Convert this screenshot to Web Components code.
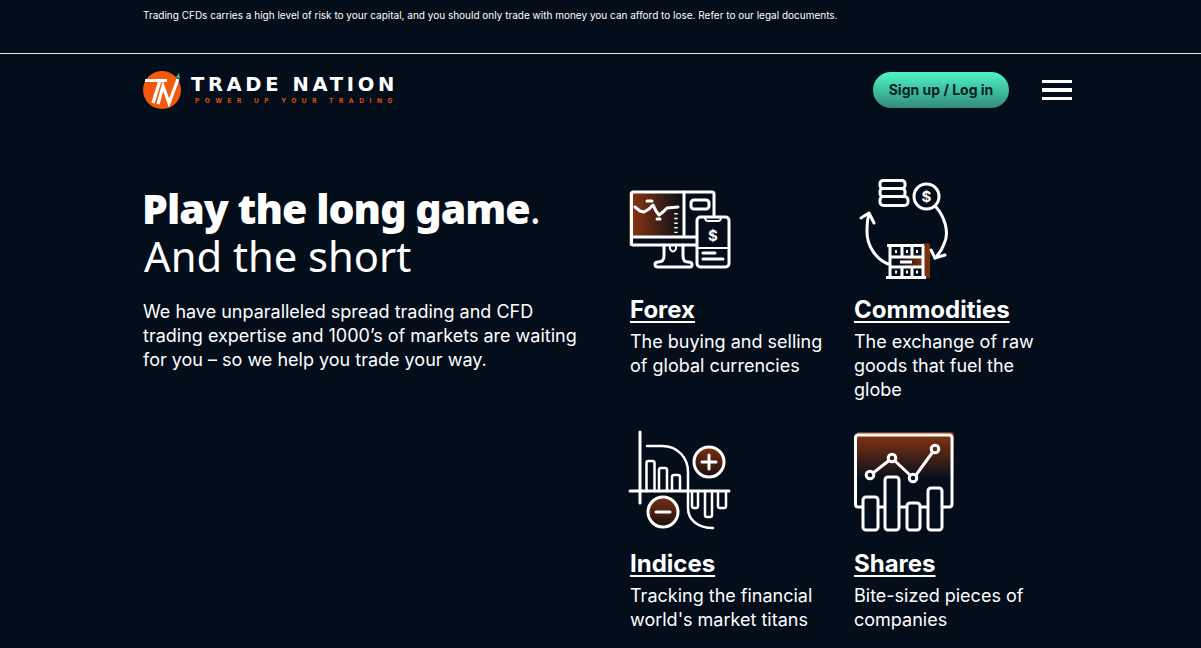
<!DOCTYPE html>
<html lang="en">
<head>
<meta charset="utf-8">
<title>Trade Nation</title>
<style>
	html, body { margin: 0; padding: 0; background: #040e1b; height: 648px; overflow: hidden; }
	body { color: #fff; font-family: Inter, "Liberation Sans", sans-serif; }
</style>
</head>
<body>
<risk-bar>Trading CFDs carries a high level of risk to your capital, and you should only trade with money you can afford to lose. Refer to our legal documents.</risk-bar>
<site-header></site-header>
<hero-section>
	<span slot="strong">Play the long game</span>
	<span slot="rest">And the short</span>
	<span slot="intro">We have unparalleled spread trading and CFD trading expertise and 1000’s of markets are waiting for you – so we help you trade your way.</span>
	<market-card icon="forex" title-text="Forex">The buying and selling of global currencies</market-card>
	<market-card icon="commodities" title-text="Commodities">The exchange of raw goods that fuel the globe</market-card>
	<market-card icon="indices" title-text="Indices" view="0 2 100 100">Tracking the financial world's market titans</market-card>
	<market-card icon="shares" title-text="Shares" view="0 2 100 100">Bite-sized pieces of companies</market-card>
</hero-section>

<script>
class RiskBar extends HTMLElement {
	constructor() {
		super();
		this.attachShadow({ mode: 'open' });
		this.shadowRoot.innerHTML = `
			<style>
				:host {
					display: block;
					box-sizing: border-box;
					height: 54px;
					border-bottom: 1px solid #e8eaec;
					padding: 9px 0 0 143px;
					font-size: 10px;
					line-height: 13px;
					color: #fff;
				}
			</style>
			<slot></slot>
		`;
	}
}

class SiteLogo extends HTMLElement {
	constructor() {
		super();
		this.attachShadow({ mode: 'open' });
		this.shadowRoot.innerHTML = `
			<style>
				:host { display: flex; align-items: center; gap: 9px; }
				svg { display: block; }
				.words { display: flex; flex-direction: column; }
				.name {
					font-family: "DejaVu Sans", sans-serif;
					font-weight: 700;
					font-size: 19.5px;
					line-height: 18px;
					letter-spacing: 3.65px;
					white-space: nowrap;
				}
				.tag {
					font-family: Inter, sans-serif;
					font-weight: 700;
					font-size: 6.5px;
					line-height: 8px;
					letter-spacing: 5.57px;
					color: #e8500f;
					margin: 3px 0 0 4px;
					white-space: nowrap;
				}
			</style>
			<svg width="39" height="38" viewBox="0 0 39 38">
				<circle cx="19" cy="19" r="19" fill="#f2590d"/>
				<path d="M2 9.500 H24 M17 9.500 L10 32" stroke="#fff" stroke-width="3.2" fill="none"/>
				<path d="M15 33 L20 15 L26 32 L35 8" stroke="#fff" stroke-width="3.2" fill="none"/>
				<path d="M33 6 L36 2 L37 8 Z" fill="#35b99a"/>
			</svg>
			<div class="words">
				<span class="name">TRADE NATION</span>
				<span class="tag">POWER UP YOUR TRADING</span>
			</div>
		`;
	}
}

class SiteHeader extends HTMLElement {
	constructor() {
		super();
		this.attachShadow({ mode: 'open' });
		this.shadowRoot.innerHTML = `
			<style>
				:host {
					display: flex;
					align-items: center;
					justify-content: space-between;
					box-sizing: border-box;
					width: 929px;
					margin-left: 143px;
					height: 72px;
				}
				.actions { display: flex; align-items: center; gap: 33px; }
				.login {
					display: flex;
					align-items: center;
					justify-content: center;
					box-sizing: border-box;
					width: 136px;
					height: 36px;
					padding-bottom: 1px;
					border-radius: 18px;
					background: linear-gradient(180deg, #4ef5c6 0%, #338c78 100%);
					color: #03202a;
					font-weight: 700;
					font-size: 14px;
				}
				.burger {
					display: flex;
					flex-direction: column;
					justify-content: space-between;
					width: 30px;
					height: 20px;
				}
				.burger i { display: block; height: 3.300px; background: #fff; }
			</style>
			<site-logo></site-logo>
			<div class="actions">
				<div class="login">Sign up / Log in</div>
				<div class="burger"><i></i><i></i><i></i></div>
			</div>
		`;
	}
}

const MARKET_ICONS = {
	forex: `
		<defs><linearGradient id="g" x1="0" x2="1" y1="0" y2="0">
			<stop offset="0" stop-color="#8a3610"/><stop offset="1" stop-color="#040e1b"/>
		</linearGradient></defs>
		<path d="M1 13 H54 V57 H1 Z" fill="url(#g)" stroke="none"/>
		<path d="M0.500 13 V65" stroke="#c8682e" stroke-width="2"/>
		<path d="M67 65 H3 Q1.500 65 1.500 63 V14 Q1.500 12 3 12 H82 Q84 12 84 14 V36" />
		<path d="M1.500 57 H67 M54 12 V57 M34 65 V76 Q34 82 28 82 Q25 82 25 84.500 Q25 87 28 87 H60 Q62 87 62 84.500 Q62 82 58 82 Q53 82 53 76 V65" />
		<path d="M40 65 V69 Q43 74 46 69 V65" stroke-width="2"/>
		<rect x="61" y="20" width="18" height="9" rx="3"/>
		<rect x="67" y="37" width="32" height="50" rx="3.500" fill="#040e1b"/>
		<path d="M75 37 Q75 41 78 41 H88 Q91 41 91 37 M67 68 H99" stroke-width="2"/>
		<path d="M73 73 H85 M73 79 H93" />
		<path d="M5 27 L10 31 L14 32 L19 29 L23 25 L26 31 L29 35 L33 32 L37 28 L48 27" />
		<path d="M17 21 H22 M27 39 H30" />
		<path d="M46 33 V53" stroke-dasharray="1.500 3.200" stroke-linecap="butt" stroke-width="3.400"/>
		<text x="83" y="61" font-size="15" font-weight="700" text-anchor="middle" fill="#fff" stroke="none">$</text>
	`,
	commodities: `
		<defs><linearGradient id="g" x1="0" x2="1" y1="0" y2="0">
			<stop offset="0.3" stop-color="#040e1b"/><stop offset="1" stop-color="#8a3610"/>
		</linearGradient></defs>
		<path d="M52 63.500 H72 V65 H52 Z" fill="url(#g)"  stroke="none"/>
		<path d="M70 63.500 H76 V98 H70 Z" fill="#7a3010" stroke="none"/>
		<rect x="26" y="0.500" width="25" height="8" rx="3"/>
		<rect x="26" y="8.500" width="25" height="8" rx="3"/>
		<rect x="26" y="16.500" width="28" height="9" rx="3.500"/>
		<circle cx="72.500" cy="16.500" r="12.500"/>
		<text x="72.500" y="22" font-size="15" font-weight="700" text-anchor="middle" fill="#fff" stroke="none">$</text>
		<path d="M82 27 C90 36 96 52 90 64 C88 70 85 74 81 78" />
		<path d="M77 70 L81 78 L91 75" />
		<path d="M34 84 C22 79 13 66 13 52 C13 46 13 40 15 34" />
		<path d="M7 38 L15 33 L20 43" />
		<rect x="36" y="66" width="33" height="31" fill="#040e1b" stroke="none"/>
		<rect x="38" y="78" width="31" height="9" fill="url(#g)" stroke="none"/>
		<path d="M33 65.500 H70 M36 65.500 V97 M69 65.500 V97 M32 97.500 H72 M36 77 H69 M36 87 H69 M48 66 V77 M58 66 V77 M48 87 V97 M58 87 V97" stroke-linecap="butt"/>
		<path d="M41 71.500 H43 M52 71.500 H54 M62 71.500 H64 M41 92 H43 M52 92 H54 M62 92 H64 M46 82 H58" stroke-width="3" stroke-linecap="butt"/>
	`,
	indices: `
		<defs><linearGradient id="g" x1="0" x2="0" y1="0" y2="1">
			<stop offset="0" stop-color="#7a3010"/><stop offset="1" stop-color="#1a0f10"/>
		</linearGradient></defs>
		<path d="M10 0 V71 M0 59 H99" />
		<path d="M17 14 H32 C48 14 58 26 58 40 V76 C58 88 68 96 83 96" stroke-width="2.500"/>
		<path d="M16.500 59 V31 Q16.500 29 18.500 29 H22.500 Q24.500 29 24.500 31 V59 M29 59 V38 Q29 36 31 36 H35 Q37 36 37 38 V59 M42 59 V45 Q42 43 44 43 H48 Q50 43 50 45 V59" stroke-width="2.500"/>
		<path d="M62 59 V74 Q62 76 64 76 H66 Q68 76 68 74 V59 M75 59 V83 Q75 85 77 85 H80 Q82 85 82 83 V59 M88 59 V74 Q88 76 90 76 H94 Q96 76 96 74 V59" stroke-width="2.500"/>
		<circle cx="79" cy="30" r="15" fill="url(#g)"/>
		<path d="M72 30 H86 M79 23 V37" />
		<circle cx="33" cy="80" r="15" fill="url(#g)"/>
		<path d="M26 80 H40" />
	`,
	shares: `
		<defs><linearGradient id="g" x1="0" x2="0" y1="0" y2="1">
			<stop offset="0" stop-color="#8a3610"/><stop offset="0.95" stop-color="#040e1b"/>
		</linearGradient></defs>
		<path d="M3 2 Q3 0 5 0 H97 Q100 0 100 3 V50 H3 Z" fill="url(#g)" stroke="none"/>
		<path d="M9 75 H4 Q1.500 75 1.500 72 V6 Q1.500 3 4 3 H95 Q98 3 98 6 V72 Q98 75 95 75 H88 M24 75 H31 M45 75 H53 M66 75 H74" />
		<rect x="9" y="65" width="15" height="33" rx="3" fill="#040e1b"/>
		<rect x="31" y="45" width="14" height="53" rx="3" fill="#040e1b"/>
		<rect x="53" y="71" width="13" height="27" rx="3" fill="#040e1b"/>
		<rect x="74" y="56" width="14" height="42" rx="3" fill="#040e1b"/>
		<path d="M19 41 L35 28.500 M41 29 L56 43 M62 43 L78 21" />
		<circle cx="16" cy="43" r="3.800"/>
		<circle cx="38" cy="26" r="3.800"/>
		<circle cx="59" cy="46" r="3.800"/>
		<circle cx="81" cy="17" r="3.800"/>
	`
};

class MarketCard extends HTMLElement {
	constructor() {
		super();
		this.attachShadow({ mode: 'open' });
		const icon = MARKET_ICONS[this.getAttribute('icon')] || '';
		const title = this.getAttribute('title-text') || '';
		const view = this.getAttribute('view') || '0 0 100 100';
		this.shadowRoot.innerHTML = `
			<style>
				:host { display: block; }
				svg {
					display: block;
					width: 100px;
					height: 100px;
					overflow: visible;
					fill: none;
					stroke: #fff;
					stroke-width: 3;
					stroke-linecap: round;
					stroke-linejoin: round;
					font-family: Inter, sans-serif;
				}
				h3 {
					margin: 15px 0 0;
					font-size: 24px;
					line-height: 30px;
					font-weight: 700;
					text-decoration: underline;
					text-decoration-thickness: 2px;
					text-underline-offset: 3px;
				}
				p {
					margin: 5px 0 0;
					width: 205px;
					font-size: 18px;
					line-height: 24px;
				}
			</style>
			<svg viewBox="${view}">${icon}</svg>
			<h3>${title}</h3>
			<p><slot></slot></p>
		`;
	}
}

class HeroSection extends HTMLElement {
	constructor() {
		super();
		this.attachShadow({ mode: 'open' });
		this.shadowRoot.innerHTML = `
			<style>
				:host {
					display: grid;
					grid-template-columns: 487px 1fr;
					width: 929px;
					margin-left: 143px;
					padding-top: 54px;
				}
				h1 {
					margin: 4px 0 0;
					font-family: "Noto Sans", sans-serif;
					font-size: 41.7px;
					line-height: 48px;
					font-weight: 400;
				}
				h1 .strong { display: block; white-space: nowrap; margin-left: -1px; }
				h1 .rest { display: block; margin-left: 1px; }
				h1 b { font-weight: 900; font-size: 41px; letter-spacing: -0.95px; }
				p {
					margin: 20px 0 0;
					width: 440px;
					font-size: 18px;
					line-height: 24px;
				}
				.markets {
					display: grid;
					grid-template-columns: 224px 224px;
					row-gap: 32px;
					align-content: start;
				}
			</style>
			<div>
				<h1><span class="strong"><b><slot name="strong"></slot></b>.</span><span class="rest"><slot name="rest"></slot></span></h1>
				<p><slot name="intro"></slot></p>
			</div>
			<div class="markets"><slot></slot></div>
		`;
	}
}

customElements.define('risk-bar', RiskBar);
customElements.define('site-logo', SiteLogo);
customElements.define('site-header', SiteHeader);
customElements.define('market-card', MarketCard);
customElements.define('hero-section', HeroSection);
</script>
</body>
</html>
